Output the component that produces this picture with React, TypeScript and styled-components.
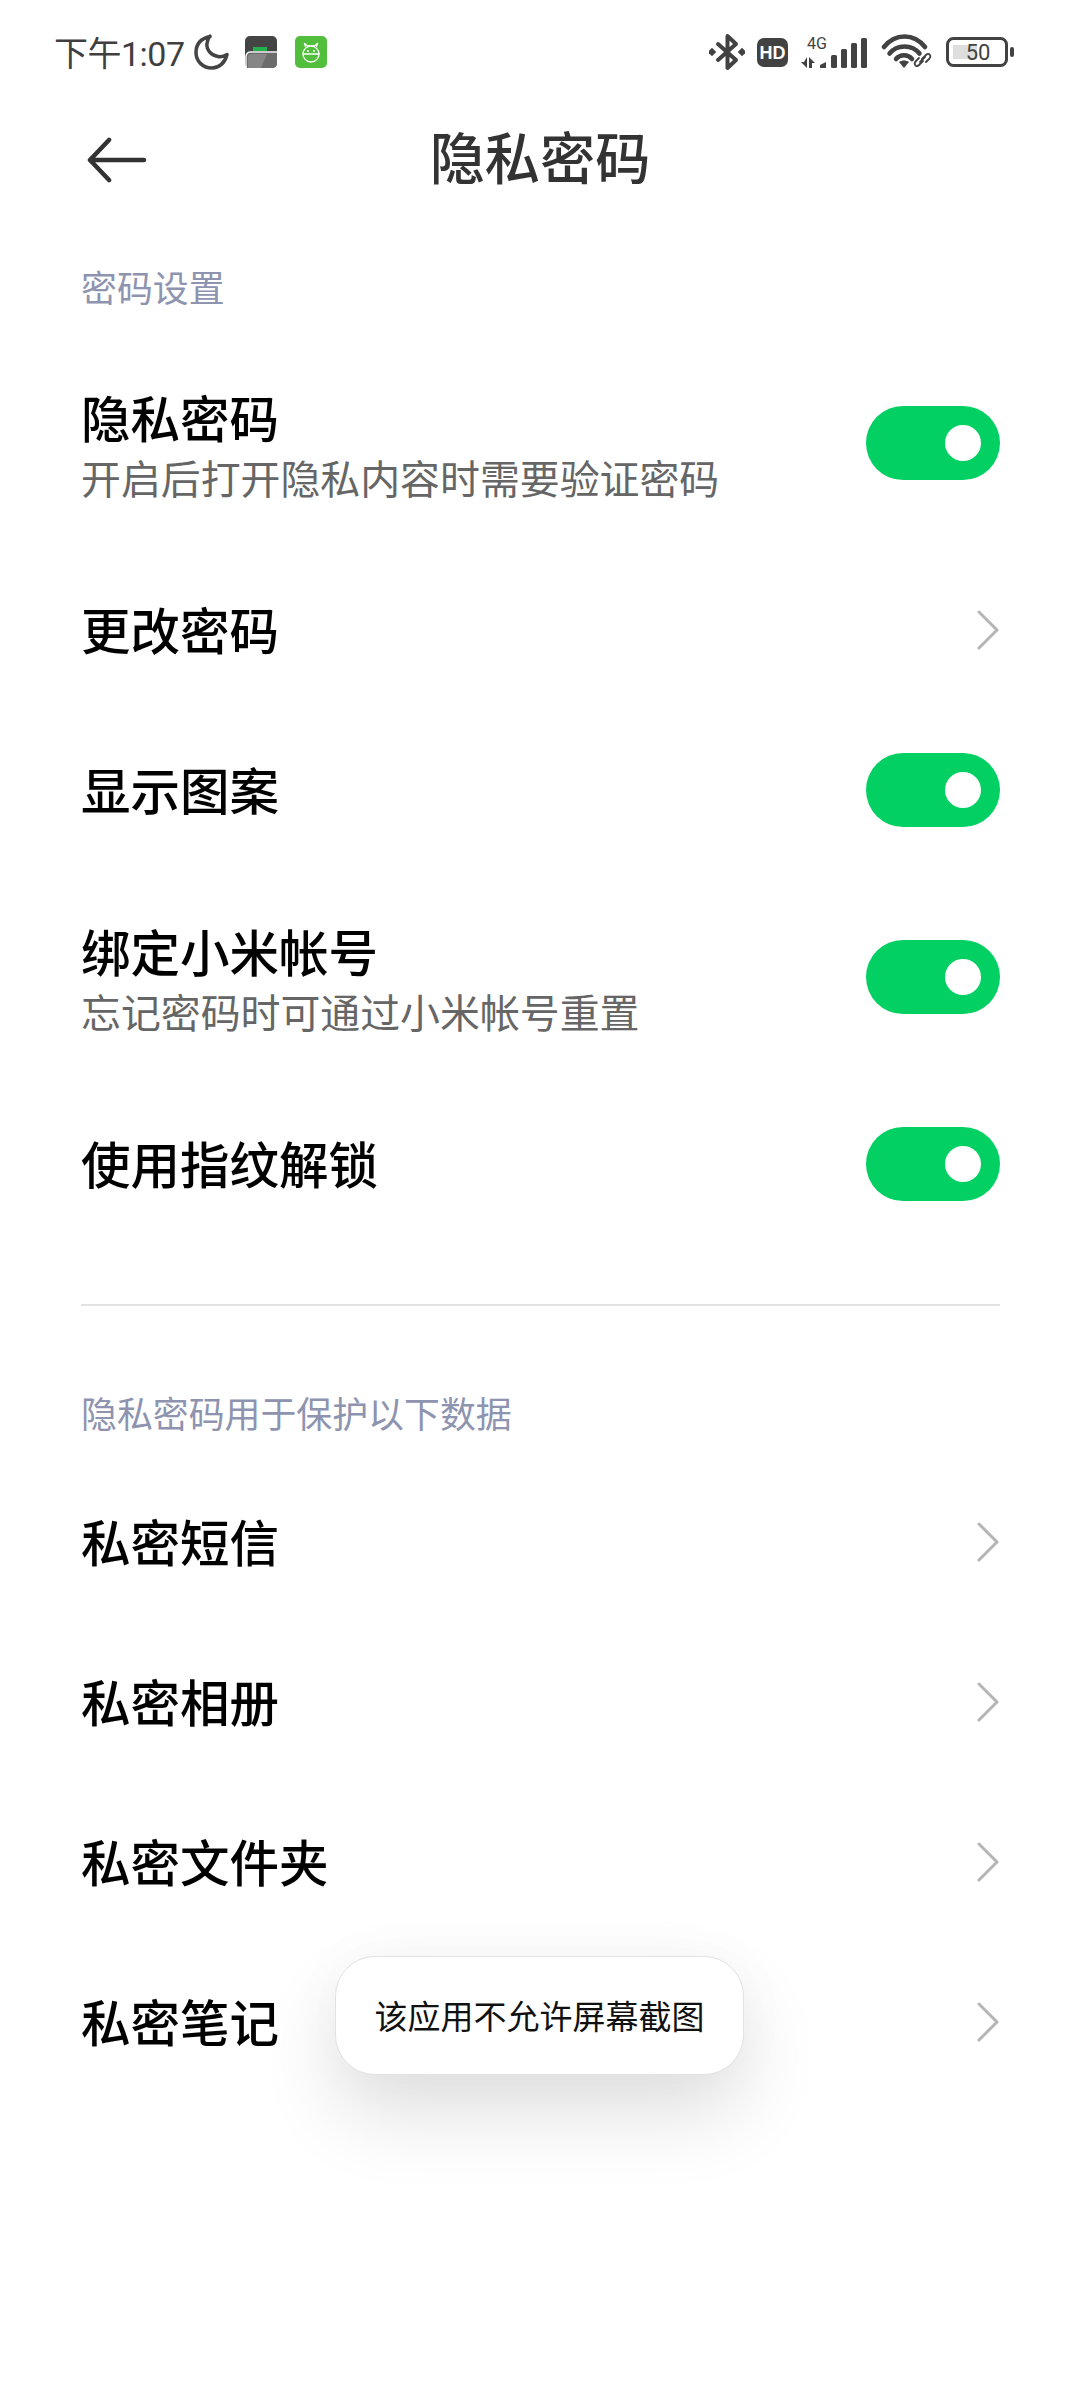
import { createGlobalStyle, styled } from "styled-components";

const GlobalStyle = createGlobalStyle`
  html, body {
    margin: 0;
    padding: 0;
    background: #fff;
  }
  body {
    font-family: "Noto Sans CJK SC", "Noto Sans", sans-serif;
  }
`;

const Page = styled.div`
  position: relative;
  width: 1080px;
  height: 2400px;
  overflow: hidden;
  background: #fff;
`;

const StatusBar = styled.div`
  height: 104px;
  padding: 0 66px 0 54px;
  display: flex;
  align-items: center;
  justify-content: space-between;
  box-sizing: border-box;
`;

const StatusGroup = styled.div`
  display: flex;
  align-items: center;
`;

const Clock = styled.span`
  font-family: "Roboto", "Noto Sans CJK SC", sans-serif;
  font-size: 34px;
  letter-spacing: -0.5px;
  line-height: 40px;
  color: #3f3f3f;
  padding-top: 4px;
  margin-right: 9px;
`;

const Glyph = styled.svg<{ $gap?: number }>`
  display: block;
  flex: none;
  margin-left: ${(p) => p.$gap ?? 0}px;
`;

const Header = styled.div`
  height: 108px;
  display: grid;
  grid-template-columns: 1fr auto 1fr;
  align-items: center;
  padding-left: 87px;
`;

const BackIcon = styled.svg`
  display: block;
  margin-top: 6px;
`;

const Title = styled.h1`
  margin: 0 0 6px -87px;
  font-size: 55.200px;
  line-height: 70px;
  font-weight: 500;
  color: #333;
`;

const SectionLabel = styled.div<{ $top: number }>`
  padding: ${(p) => p.$top}px 81px 20px;
  font-size: 35.900px;
  line-height: 60px;
  color: #8e94b0;
`;

const Row = styled.div<{ $tall?: boolean }>`
  height: ${(p) => (p.$tall ? 214 : 160)}px;
  box-sizing: border-box;
  padding: 0 80px 0 81px;
  display: flex;
  align-items: center;
  justify-content: space-between;
`;

const RowText = styled.div<{ $tall?: boolean }>`
  display: flex;
  flex-direction: column;
  padding: ${(p) => (p.$tall ? "5px 0 0" : "0 0 3px")};
`;

const RowTitle = styled.div`
  font-size: 49.500px;
  line-height: 62px;
  font-weight: 500;
  color: #000;
`;

const RowHint = styled.div`
  font-size: 39.900px;
  line-height: 57px;
  color: #666;
`;

const Toggle = styled.div`
  width: 134px;
  height: 74px;
  border-radius: 37px;
  background: #03d062;
  display: flex;
  align-items: center;
  justify-content: flex-end;
  padding-right: 19px;
  box-sizing: border-box;
`;

const Knob = styled.div`
  width: 36px;
  height: 36px;
  border-radius: 50%;
  background: #fff;
`;

const ChevronIcon = styled.svg`
  display: block;
  margin-right: 1px;
`;

const Divider = styled.div`
  height: 2px;
  margin: 60px 80px 0 81px;
  background: #e2e2e2;
`;

const Toast = styled.div`
  position: absolute;
  left: 335px;
  top: 1956px;
  width: 409px;
  height: 119px;
  box-sizing: border-box;
  padding-bottom: 2px;
  border: 1px solid #e2e2e2;
  border-radius: 40px;
  background: #fff;
  box-shadow: 0 40px 80px rgba(0, 0, 0, 0.12), 0 0 60px rgba(0, 0, 0, 0.03);
  display: flex;
  align-items: center;
  justify-content: center;
  font-size: 33px;
  color: #111;
`;

function Moon() {
  return (
    <Glyph width="35" height="36" viewBox="0 0 35 36">
      <path
        d="M16 2.500C7 4.500 2 10 2 18.500c0 9 7 15.500 16 15.500 7 0 13-5 15-13.500-3 2-6 2.500-9 2-7-1-12-7-11-13 .5-3 1-5 3-7.500z"
        fill="none"
        stroke="#444"
        strokeWidth="3.500"
        strokeLinejoin="round"
      />
    </Glyph>
  );
}

function Wallet() {
  return (
    <Glyph $gap={16} width="32" height="32" viewBox="0 0 32 32">
      <rect width="32" height="32" rx="5" fill="#444" />
      <rect x="8" y="11" width="14" height="4" fill="#22b14c" />
      <path d="M2 32V21q0-4 4-4h26v10q0 5-5 5z" fill="#6c6c6c" />
      <path d="M3 32V21q0-3 3-3h16l-6 14z" fill="#868686" />
      <path d="M1 32V21q0-5 5-5h26" fill="none" stroke="#f6f6f6" strokeWidth="1.500" />
    </Glyph>
  );
}

function BotBadge() {
  return (
    <Glyph $gap={18} width="32" height="32" viewBox="0 0 32 32">
      <rect width="32" height="32" rx="5" fill="#52bf3c" />
      <g fill="none" stroke="#fff" strokeWidth="1.300" strokeLinecap="round">
        <path d="M10.500 10.500L9.500 7.500M21.500 10.500l1-3" />
        <path d="M9.500 7.500q2 1 3 2.500h7q1-1.500 3-2.500" />
        <rect x="8" y="10" width="16" height="16" rx="8" />
        <path d="M8 18h16" />
      </g>
      <circle cx="13" cy="15" r="1" fill="#fff" />
      <circle cx="19" cy="15" r="1" fill="#fff" />
    </Glyph>
  );
}

function Bluetooth() {
  return (
    <Glyph width="36" height="38" viewBox="0 0 36 38">
      <path
        d="M9 11l18 16-8.500 8V3L27 11 9 27"
        fill="none"
        stroke="#424242"
        strokeWidth="4"
        strokeLinejoin="round"
        strokeLinecap="round"
      />
      <rect x="0" y="16" width="6" height="6" transform="rotate(45 3 19)" fill="#424242" />
      <rect x="30" y="16" width="6" height="6" transform="rotate(45 33 19)" fill="#424242" />
    </Glyph>
  );
}

function HdBadge() {
  return (
    <Glyph $gap={12} width="31" height="29" viewBox="0 0 31 29">
      <rect width="31" height="29" rx="7" fill="#424242" />
      <text
        x="15.500"
        y="21"
        textAnchor="middle"
        fontFamily="Liberation Sans, sans-serif"
        fontWeight="700"
        fontSize="18"
        fill="#fff"
      >
        HD
      </text>
    </Glyph>
  );
}

function Signal() {
  return (
    <Glyph $gap={12} width="67" height="38" viewBox="0 -4 67 38">
      <text x="7" y="12" fontFamily="Roboto, sans-serif" fontSize="16" fill="#424242">
        4G
      </text>
      <path d="M7 20v11L1 25h3zM9 31V20l6 6h-3v5z" fill="#424242" />
      <path d="M20 31v-3l6-3v6z" fill="#424242" />
      <rect x="31" y="18" width="6" height="13" rx="1.500" fill="#424242" />
      <rect x="41" y="12" width="6" height="19" rx="1.500" fill="#424242" />
      <rect x="51" y="6" width="6" height="25" rx="1.500" fill="#424242" />
      <rect x="61" y="1" width="6" height="30" rx="1.500" fill="#424242" />
    </Glyph>
  );
}

function Wifi() {
  return (
    <Glyph $gap={14} width="51" height="36" viewBox="0 0 51 36">
      <g fill="none" stroke="#424242" strokeWidth="4.500" strokeLinecap="round">
        <path d="M3 13C14 -1 33 -1 44 13" />
        <path d="M8.500 19.500C16 10 31 10 38.500 19.500" />
        <path d="M15 25c4-5 12-5 16 0" />
      </g>
      <path d="M18 28c3-2 7-2 10 0l-5 6z" fill="#424242" />
      <g fill="none" stroke="#424242" strokeWidth="1.800" strokeLinecap="round">
        <path d="M41 25l4-4c3-3 6 1 3 4l-3 3" />
        <path d="M42 27l-4 4c-3 3-6-1-3-4l3-3" />
        <path d="M39 28l5-5" />
      </g>
    </Glyph>
  );
}

function Battery() {
  return (
    <Glyph $gap={14} width="68" height="30" viewBox="0 0 68 30">
      <rect x="1.500" y="1.500" width="59" height="27" rx="6" fill="none" stroke="#424242" strokeWidth="3" />
      <rect x="7" y="8" width="24" height="14" fill="#dedede" />
      <rect x="64" y="10" width="4" height="10" rx="2" fill="#424242" />
      <text x="32" y="23" textAnchor="middle" fontFamily="Roboto, sans-serif" fontSize="22" fill="#424242">
        50
      </text>
    </Glyph>
  );
}

function BackArrow() {
  return (
    <BackIcon width="60" height="50" viewBox="0 0 60 50">
      <path
        d="M22 4L3 24l19 20M3 24h54"
        fill="none"
        stroke="#333"
        strokeWidth="4.500"
        strokeLinecap="round"
        strokeLinejoin="round"
      />
    </BackIcon>
  );
}

function Chevron() {
  return (
    <ChevronIcon width="22" height="40" viewBox="0 0 22 40">
      <path d="M2 2l18 18L2 38" fill="none" stroke="#b5b5b5" strokeWidth="3" strokeLinecap="round" strokeLinejoin="round" />
    </ChevronIcon>
  );
}

type Item = { title: string; hint?: string; on?: boolean };

const passwordItems: Item[] = [
  { title: "隐私密码", hint: "开启后打开隐私内容时需要验证密码", on: true },
  { title: "更改密码" },
  { title: "显示图案", on: true },
  { title: "绑定小米帐号", hint: "忘记密码时可通过小米帐号重置", on: true },
  { title: "使用指纹解锁", on: true },
];

const dataItems: Item[] = [
  { title: "私密短信" },
  { title: "私密相册" },
  { title: "私密文件夹" },
  { title: "私密笔记" },
];

function SettingRow({ title, hint, on }: Item) {
  return (
    <Row $tall={!!hint}>
      <RowText $tall={!!hint}>
        <RowTitle>{title}</RowTitle>
        {hint && <RowHint>{hint}</RowHint>}
      </RowText>
      {on ? (
        <Toggle>
          <Knob />
        </Toggle>
      ) : (
        <Chevron />
      )}
    </Row>
  );
}

export default function App() {
  return (
    <Page>
      <GlobalStyle />
      <StatusBar>
        <StatusGroup>
          <Clock>下午1:07</Clock>
          <Moon />
          <Wallet />
          <BotBadge />
        </StatusGroup>
        <StatusGroup>
          <Bluetooth />
          <HdBadge />
          <Signal />
          <Wifi />
          <Battery />
        </StatusGroup>
      </StatusBar>
      <Header>
        <BackArrow />
        <Title>隐私密码</Title>
      </Header>
      <SectionLabel $top={44}>密码设置</SectionLabel>
      {passwordItems.map((item) => (
        <SettingRow key={item.title} {...item} />
      ))}
      <Divider />
      <SectionLabel $top={76}>隐私密码用于保护以下数据</SectionLabel>
      {dataItems.map((item) => (
        <SettingRow key={item.title} {...item} />
      ))}
      <Toast>该应用不允许屏幕截图</Toast>
    </Page>
  );
}
